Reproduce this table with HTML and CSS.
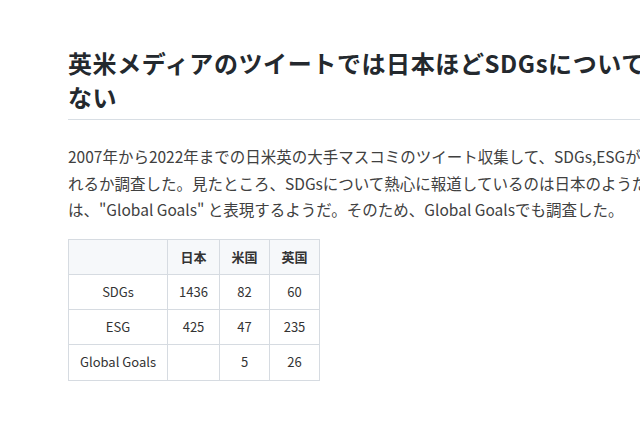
FILE: index.html
```html
<!DOCTYPE html>
<html lang="ja">
<head>
    <meta charset="UTF-8">
    <title>英米メディアのツイートでは日本ほどSDGsについて言及されていない</title>
    <link rel="stylesheet" href="styles.css">
</head>
<body>
    <div class="page">
        <article class="post">
            <h1 class="post-title">英米メディアのツイートでは日本ほどSDGsについて言及されてい<br>ない</h1>
            <p class="post-text">
                2007年から2022年までの日米英の大手マスコミのツイート収集して、SDGs,ESGがどのくらい言及さ<br>
                れるか調査した。見たところ、SDGsについて熱心に報道しているのは日本のようだ。英米のメディア<br>
                は、"Global Goals" と表現するようだ。そのため、Global Goalsでも調査した。
            </p>
            <table class="count-table">
                <thead>
                    <tr>
                        <th class="col-label"></th>
                        <th class="col-jp">日本</th>
                        <th class="col-us">米国</th>
                        <th class="col-uk">英国</th>
                    </tr>
                </thead>
                <tbody>
                    <tr>
                        <td>SDGs</td>
                        <td>1436</td>
                        <td>82</td>
                        <td>60</td>
                    </tr>
                    <tr>
                        <td>ESG</td>
                        <td>425</td>
                        <td>47</td>
                        <td>235</td>
                    </tr>
                    <tr>
                        <td>Global Goals</td>
                        <td></td>
                        <td>5</td>
                        <td>26</td>
                    </tr>
                </tbody>
            </table>
        </article>
    </div>
</body>
</html>
```

FILE: styles.css
```css
html, body {
    margin: 0;
    padding: 0;
    background-color: #fff;
    overflow: hidden;
}

body {
    font-family: "Noto Sans CJK JP", "Noto Sans", sans-serif;
    color: #333;
}

.page {
    width: 860px;
    padding: 46px 0 0 68px;
}

.post-title {
    margin: 0;
    padding-bottom: 5px;
    font-size: 24px;
    line-height: 34px;
    font-weight: 700;
    letter-spacing: 0.6px;
    color: #24292e;
    white-space: nowrap;
    border-bottom: 1px solid #d8dee4;
}

.post-text {
    margin: 23px 0 16px;
    font-size: 15.5px;
    line-height: 26.5px;
    color: #404040;
    white-space: nowrap;
}

.count-table {
    border-collapse: collapse;
    font-size: 13px;
    color: #333;
}

.count-table th,
.count-table td {
    border: 1px solid #d6dbe1;
    padding: 7px 0;
    line-height: 20.4px;
    text-align: center;
}

.count-table th {
    background-color: #f6f8fa;
    font-weight: 700;
    line-height: 20px;
}

.col-label {
    width: 98px;
}

.col-jp {
    width: 51px;
}

.col-us,
.col-uk {
    width: 49px;
}
```
